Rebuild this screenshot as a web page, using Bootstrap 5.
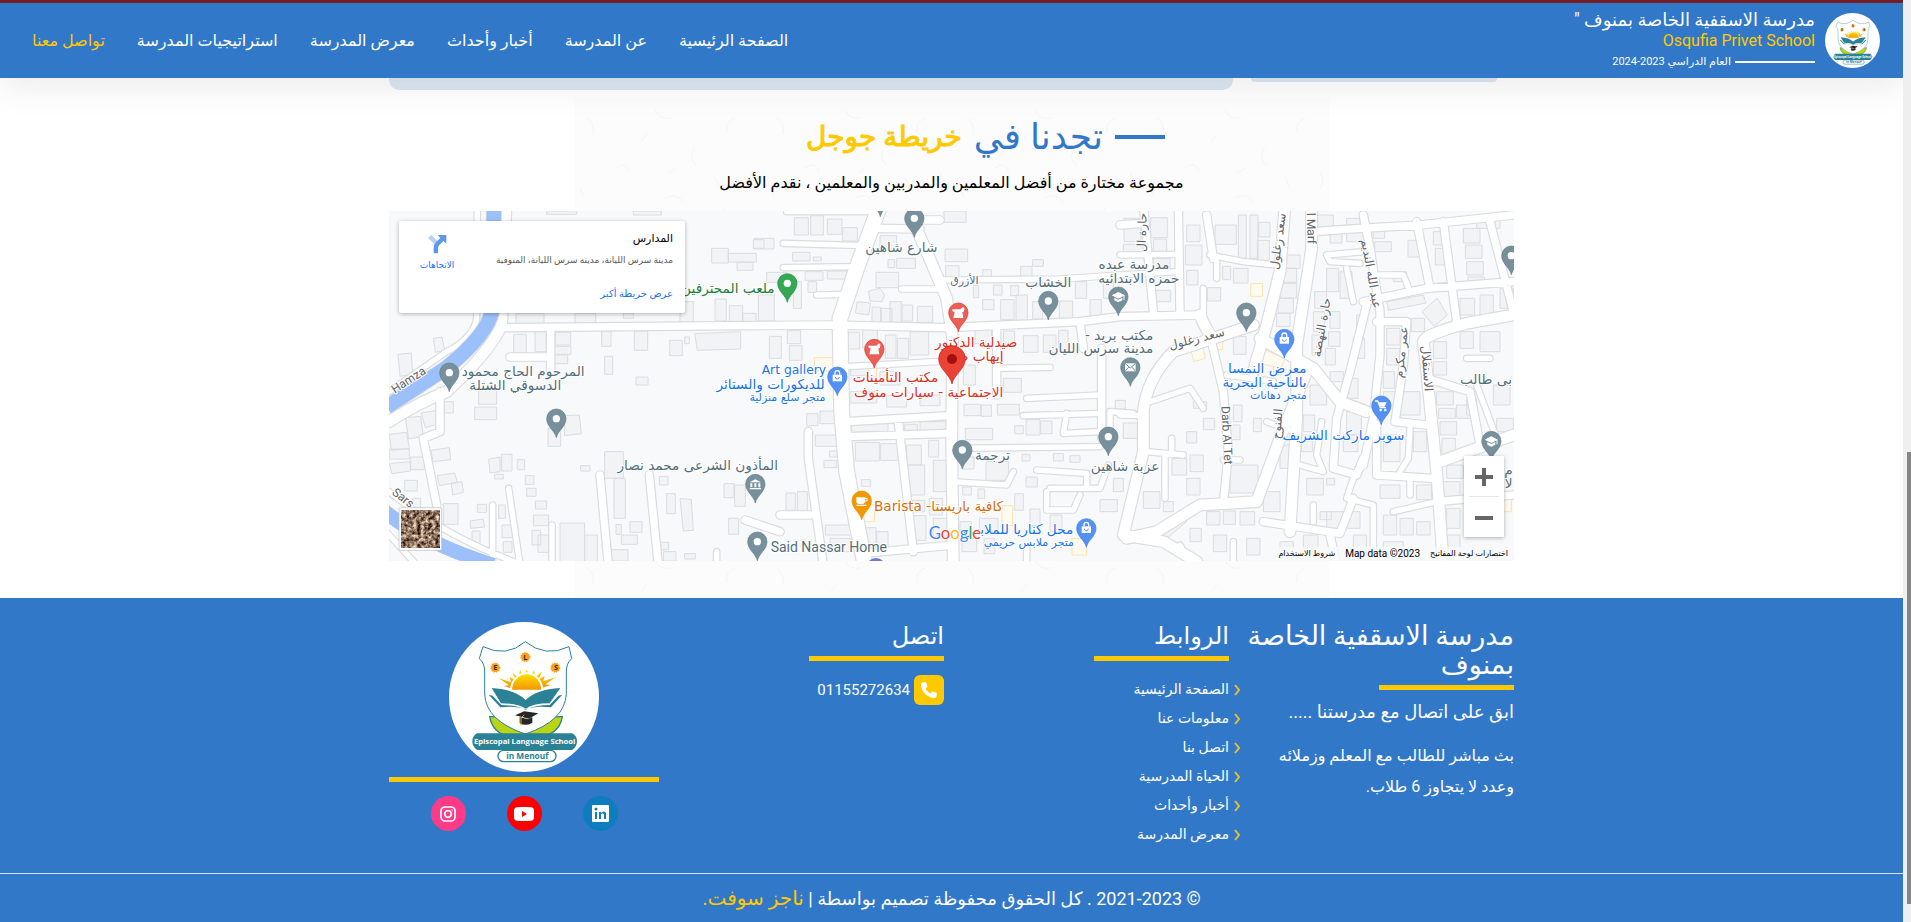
<!DOCTYPE html>
<html lang="ar" dir="rtl">
<head>
<meta charset="utf-8">
<meta name="viewport" content="width=device-width, initial-scale=1">
<title>مدرسة الاسقفية الخاصة بمنوف - تواصل معنا</title>
<link href="https://cdn.jsdelivr.net/npm/bootstrap@5.3.0/dist/css/bootstrap.min.css" rel="stylesheet">
<script src="https://cdn.jsdelivr.net/npm/bootstrap@5.3.0/dist/js/bootstrap.bundle.min.js" defer></script>
<style>
:root{--blue:#3178c9;--gold:#ffc900}
body{font-family:Roboto,"DejaVu Sans",sans-serif;padding-right:8px;background:#fff;color:#000;font-size:14px}
a{text-decoration:none}
.page-scroll{position:fixed;top:0;right:0;bottom:0;width:8px;background:#efefef;z-index:1050}
.page-scroll span{position:absolute;right:0;width:4px;top:49%;bottom:2%;background:#858585}
.site-head{background:var(--blue);border-top:3px solid #741d25;height:78px;box-shadow:0 12px 32px rgba(0,0,0,.07);padding:0 23px 0 32px}
.brand-text{padding-right:10px}
.brand-name{font-size:18px;line-height:20px;color:#fff}
.brand-en{font-size:16px;line-height:22px;color:var(--gold);text-align:right}
.brand-year{font-size:11px;line-height:20px;color:#fff}
.brand-year i{width:80px;height:2px;background:#fff}
.main-nav{gap:32px}
.main-nav .nav-link{font-size:16px;padding:0;color:#fff;white-space:nowrap}
.main-nav .nav-link.active{color:var(--gold)}
.wrap{width:100%;max-width:1125px;margin:0 auto}
.peek{height:20px}
.peek div{background:#dce7f4;border-radius:0 0 10px 10px}
.peek .p-side{width:246px;height:4px;margin-right:17px}
.peek .p-main{height:12px;margin-right:18px}
.find-us{padding:14px 0 37px;background:url("data:image/svg+xml,%3Csvg xmlns='http://www.w3.org/2000/svg' width='754' height='500'%3E%3Cdefs%3E%3Cpattern id='p' width='190' height='150' patternUnits='userSpaceOnUse'%3E%3Cg fill='none' stroke='%23f4f4f4'%3E%3Cpath d='M12 20q8 6 6 16M40 70q10-8 14 4M80 12q4 10 16 8M120 50q-8 8 2 18M160 20q-10 4-8 14M30 120q10 2 12 12M90 100q12-6 18 4M150 110q-4 10-16 10M175 75q6 8 0 16M66 44l6-8M110 130l10 4M140 80l4 8M5 90l4 9M100 70l-7 5M60 140l3-9'/%3E%3C/g%3E%3C/pattern%3E%3C/defs%3E%3Crect width='754' height='500' fill='%23fcfcfc'/%3E%3Crect width='754' height='500' fill='url(%23p)'/%3E%3C/svg%3E") top center/754px 500px no-repeat}
.find-us h2{font-size:36px;line-height:50px;color:var(--blue);margin:0;gap:12px}
.find-us h2::before{content:"";width:50px;height:4px;background:var(--blue);margin-right:-68px}
.find-us h2 strong{color:var(--gold);font-size:28px;font-weight:400;-webkit-text-stroke:1px var(--gold)}
.find-us p{font-size:16px;line-height:24px;margin:9px 0 16px;text-align:center}
.map{height:350px;background:#f8f9fa;position:relative;overflow:hidden}
.map>svg{width:100%;height:100%;display:block;direction:ltr}
.map-card{position:absolute;left:10px;top:10px;width:286px;height:92px;background:#fff;box-shadow:0 1px 4px rgba(0,0,0,.3);border-radius:2px;padding:8px 12px}
.map-card h3{font-size:11px;line-height:20px;margin:0;color:#000}
.map-card p{font-size:9px;line-height:22px;margin:0;color:#5b5b5b;text-align:start;white-space:nowrap}
.map-card a{font-size:10px;color:#1a73e8;line-height:14px}
.map-card .more{margin-top:16px}
.map-card .dirs{width:52px;font-size:9px;padding-top:5px}
.map-zoom{position:absolute;right:10px;bottom:24px;width:40px;background:#fff;box-shadow:0 1px 4px rgba(0,0,0,.3)}
.map-zoom button{border:0;background:none;height:40px;width:40px;padding:0}
.map-zoom hr{width:30px;margin:0 auto;border-color:#999}
.map-legal{position:absolute;right:0;bottom:0;height:14px;background:rgba(248,249,250,.8);gap:10px;padding:0 6px;font-size:8px;line-height:13px;color:#000}
.map-legal a{color:#000}
.map-legal span{font-size:10px}
.site-foot{background:var(--blue);color:#fff}
.foot-grid{display:grid;grid-template-columns:repeat(4,minmax(0,1fr));gap:15px;padding:24px 0 24px}
.foot-grid h4{font-size:24px;line-height:29px;margin:0;font-weight:400}
.foot-grid h4.school{font-size:27px}
.bar{width:135px;height:5px;background:var(--gold);margin-top:5px}
.bar.wide{width:100%}
.foot-lead{font-size:18px;line-height:24px;margin:10px 0 16px}
.foot-text{font-size:16px;line-height:31px;margin:0}
.foot-links{list-style:none;padding:0;margin:14px 0 0}
.foot-links li{height:29px;line-height:29px;display:flex;align-items:center}
.foot-links svg{margin-right:-12px;margin-left:5px}
.foot-links a{color:#fff;font-size:14px}
.phone{margin-top:14px;gap:4px;font-size:15px}
.phone span{width:30px;height:30px;border-radius:6px;background:var(--gold)}
.phone a{color:#fff}
.social{gap:41px;margin-top:14px}
.social a{width:35px;height:35px;border-radius:50%}
.social .in{background:#0e7dbe}.social .yt{background:#f00}.social .ig{background:#ff3a86}
.copy{border-top:1px solid #d5e4f5;height:49px;font-size:18px}
.copy a{color:var(--gold);font-size:20px}
/* street map */
.roads{fill:none;stroke-linejoin:round;stroke-linecap:round;--c:0px}
.roads.case{--c:7px;stroke:#dadce0}
.roads.face{stroke:#fff}
.w1{stroke-width:calc(16px + var(--c))}.w2{stroke-width:calc(22px + var(--c))}.w3{stroke-width:calc(32px + var(--c))}.w4{stroke-width:calc(44px + var(--c))}
.lbl{font-family:"DejaVu Sans",sans-serif;font-size:41px;fill:#546e7a;stroke:#fff;stroke-width:6px;paint-order:stroke;stroke-linejoin:round}
.lbl.ar{direction:rtl}
.lbl.lat{font-family:Roboto,sans-serif;font-size:42px}
.lbl.gal{font-size:37px}
.lbl.sm{font-size:33px}
.lbl.st{font-size:36px;fill:#5f6368}
.lbl.b{fill:#1a73e8}.lbl.r{fill:#d93025}.lbl.g{fill:#188038}.lbl.o{fill:#d56e0c}
</style>
</head>
<body>
<svg width="0" height="0" class="position-absolute" aria-hidden="true">
<defs>
<linearGradient id="sun" x1="0" y1="0" x2="0" y2="1"><stop offset="0" stop-color="#ffe100"/><stop offset="1" stop-color="#f39200"/></linearGradient>
<symbol id="crest" viewBox="0 0 450 450">
<circle cx="225" cy="225" r="225" fill="#fff"/>
<path d="M122 284q70-2 106 50q36-52 112-50q-10 60-84 62h-50q-74-2-84-62z" fill="#b9d514" stroke="#2b8296" stroke-width="4"/>
<path d="M102 74q70 34 127-15q60 49 131 15l8 36q-18 14-16 46v60q-4 80-123 120q-119-40-122-120v-60q2-32-16-46z" fill="#fff" stroke="#2b8296" stroke-width="3"/>
<g fill="#f9a11b" stroke="#f9a11b" stroke-width="4" stroke-dasharray="4 3"><circle cx="139" cy="137" r="13"/><circle cx="229" cy="105" r="13"/><circle cx="319" cy="137" r="13"/></g>
<g font-family="Open Sans,sans-serif" font-weight="700" font-size="22" text-anchor="middle" fill="#3a2c28"><text x="139" y="145">E</text><text x="229" y="113">L</text><text x="321" y="145">S</text></g>
<path d="M188 200l-24-8 16-2-32-22 38 13-4-16 18 10-10-24 18 18 5-25 12 22 8-24 10 24 12-22 4 22 20-18-10 24 18-10-4 16 38-13-32 22 16 2-24 8z" fill="url(#sun)"/>
<path d="M186 206a47 52 0 0 1 94 0z" fill="url(#sun)" stroke="#fff" stroke-width="6"/>
<path d="M128 198q70 4 102 36q32-32 104-36l-32 46q-48 0-72 16q-24-16-74-16z" fill="#2b8296"/>
<path d="M119 218l12 3 26 28q44 0 73 14q30-14 72-14l26-28 12-3-34 38q-46-6-76 6q-30-12-76-6z" fill="#2b8296"/>
<path id="crestArc" d="M174 292q55 56 118-4" fill="none"/>
<text font-family="Open Sans,sans-serif" font-weight="700" font-size="11" fill="#2b8296"><textPath href="#crestArc">Episcopal School Menouf</textPath></text>
<path d="M198 280l28-12 42 6-28 16zM212 286v18q18 10 38-2v-16l-12 6z" fill="#262626"/><path d="M226 278l-10 10v22" stroke="#e7a916" stroke-width="3" fill="none"/>
<path d="M84 334h286q14 8 14 24q0 16-14 26H84q-14-10-14-26q0-16 14-24z" fill="#2b8296"/>
<text x="227" y="365" text-anchor="middle" font-family="Open Sans,sans-serif" font-weight="700" font-size="23" fill="#fff">Episcopal Language School</text>
<rect x="147" y="385" width="174" height="34" rx="17" fill="#fff" stroke="#2b8296" stroke-width="4"/>
<text x="235" y="411" text-anchor="middle" font-family="Open Sans,sans-serif" font-weight="700" font-size="25" fill="#2b8296">in Menouf</text>
</symbol>
</defs>
</svg>

<header class="site-head d-flex align-items-center justify-content-between sticky-top">
<a href="#" class="d-flex align-items-center">
<svg width="55" height="55" role="img" aria-label="Episcopal Language School"><use href="#crest"/></svg>
<span class="brand-text d-flex flex-column">
<span class="brand-name">مدرسة الاسقفية الخاصة بمنوف "</span>
<span class="brand-en" dir="ltr">Osqufia Privet School</span>
<span class="brand-year d-flex align-items-center gap-1"><i></i><span>العام الدراسي 2023-2024</span></span>
</span>
</a>
<nav class="main-nav nav flex-nowrap">
<a class="nav-link" href="#">الصفحة الرئيسية</a>
<a class="nav-link" href="#">عن المدرسة</a>
<a class="nav-link" href="#">أخبار وأحداث</a>
<a class="nav-link" href="#">معرض المدرسة</a>
<a class="nav-link" href="#">استراتيجيات المدرسة</a>
<a class="nav-link active" href="#" aria-current="page">تواصل معنا</a>
</nav>
</header>

<main>
<div class="wrap peek d-flex align-items-start"><div class="p-side"></div><div class="p-main flex-fill"></div></div>
<section class="find-us">
<h2 class="d-flex align-items-center justify-content-center fw-normal"><span>تجدنا في</span><strong>خريطة جوجل</strong></h2>
<p>مجموعة مختارة من أفضل المعلمين والمدربين والمعلمين ، نقدم الأفضل</p>
<div class="wrap"><div class="map">
<svg viewBox="27 18 3375 1050" preserveAspectRatio="xMidYMid slice" role="img" aria-label="خريطة">
<defs>
<filter id="ground" x="0" y="0" width="1" height="1" color-interpolation-filters="sRGB"><feTurbulence type="fractalNoise" baseFrequency=".09" numOctaves="3" seed="4"/><feColorMatrix values="1.6 0 0 0 -.24  1.5 .1 0 0 -.34  1.3 0 .1 0 -.32  0 0 0 0 1"/></filter>
<g id="pin"><path d="M0 57C-4 36-29 24-29 0A29 29 0 1 1 29 0C29 24 4 36 0 57Z"/></g>
<g id="pinDot"><use href="#pin" fill="#78909c" stroke="#607d8b" stroke-width="2"/><circle r="11" fill="#fff"/></g>
<g id="bag"><use href="#pin" fill="#5491f5" stroke="#3c7ce0" stroke-width="2"/><path d="M-14-6h28v20h-28z" fill="#fff"/><path d="M-7-6v-5a7 7 0 0 1 14 0v5" fill="none" stroke="#fff" stroke-width="4"/><path d="M-6 1a6 6 0 0 0 12 0" fill="none" stroke="#5491f5" stroke-width="3"/></g>
<g id="grad"><use href="#pin" fill="#78909c" stroke="#607d8b" stroke-width="2"/><path d="M-20-4L0-14 20-4 0 6zM-12 3L0 9 12 3v8L0 17-12 11z" fill="#fff"/><path d="M17-4v14" stroke="#fff" stroke-width="3"/></g>
<g id="pharm"><use href="#pin" fill="#ec5f57" stroke="#d93025" stroke-width="2"/><path d="M-18-10h24l8-7 5 5-2 4v4l-5 3 3 17h-30l4-17-7-4z" fill="#fff"/></g>
<g id="roadnet">
<path class="w1" d="M292 0L290 340Q280 400 200 440L27 560M27 860Q200 1000 430 1080M0 960L110 1080M386 850L420 1080M338 900V1080M516 960V1080M1010 1080V1040M1210 115L1460 122M1210 188L1440 185M1310 270L1400 268M1220 20H1500M1565 252H1690M1690 225L2040 222L2220 210L2390 200M1400 485L1700 468M1850 490L2010 487M1940 580L2160 570M1930 632L2165 625M2060 625L2050 685L2160 680M1715 730L2160 725M1710 830L1880 840L1900 800M1970 795L2120 805V850M2010 850H2160L2185 780M2000 860V915H2080L2100 870M2355 750V880M2375 700V740M2300 740L2410 750M2310 590L2430 550L2470 610M2470 250V330M2510 170V220M2220 630L2290 632M2840 150L2950 140M2840 150L2850 170L2940 175M2900 190L2920 290M3000 210L3070 210L3090 260M3260 460H3330M3290 540L3350 700M2825 650L2810 750L2830 800L2760 780M2920 820L2900 880L2980 900V1080M3040 920L3170 890M3090 670L3085 760L3060 800M3090 820V870M2660 650L2740 680M2560 1010V1080M2400 1020L2430 1080M1940 1030V1080M2190 700V620L2260 625M2220 150L2390 148M2490 150L2590 170L2690 180M2800 900V950M2540 510L2680 530M2530 765H2580"/>
<path class="w2" d="M370 368L1080 362L1360 360L1700 368L2100 350L2220 335L2460 330M180 560V680L130 700L170 900M390 456H512M512 368V500M660 810L685 1080M808 810L835 1080M1285 680V760L1330 1080M1095 945L1200 980M1200 930H1290M1480 70L1620 72M1610 45H1680M1400 650L1710 632M1400 695L1710 685M1555 650L1600 1040M1450 1045L1720 1020M1850 370V570M2165 430V700M2100 350L2110 430M2290 0L2320 320M2395 0L2400 330M2490 390L2530 560L2545 740L2530 900M2800 80L2940 70L3120 60L3400 30M2950 30L2970 130L3000 320L3000 450L2980 640L2950 780M2950 290L3140 250L3400 230M2960 300L2910 500L2870 640L2860 790L2930 810L2950 760M3110 50L3150 250M3190 50L3230 350M3330 50L3400 320M2990 350H3080L3070 480L3045 650L3140 660M3140 520L3270 560L3300 720M2990 660V810L3160 820M2650 950L2880 985L2920 880M2850 990L2870 1080M3170 890L3400 870M2480 30L2500 160M2220 60L2290 55"/>
<path class="w3" d="M378 0L365 360Q330 440 200 560Q120 590 27 650M1605 60L1700 280L1718 400L1715 700L1720 1080M2620 360Q2440 420 2380 440Q2300 520 2290 620L2290 740L2230 990L2350 1010L2450 1070M2460 330Q2480 380 2500 400M2715 0L2700 200L2660 360L2620 500M2795 0L2795 130L2750 420L2750 640L2730 980M2780 500L2700 700L2630 890L2460 900L2330 980L2240 1000M2640 400L2800 490L2880 590L2960 620M3400 330L3260 355Q3130 390 3130 410L3140 500L3170 800L3190 1080M3180 770L3400 690"/>
<path class="w4" d="M1500 0L1430 190L1380 340L1385 620L1400 800L1455 1080"/>
</g>
</defs>
<rect x="0" y="0" width="3420" height="1080" fill="#f8f9fa"/>
<g fill="#f1f3f4" stroke="#dadce0" stroke-width="3">
<path d="M500 18h90v10h-90zM760 18h84v12h-84zM1122 100h60v32h-60zM995 130h50v44h-50zM1045 145h84v26h-84zM1071 172h48v24h-48zM408 324h84v36h-84zM585 324h62v34h-62zM730 324h30v16h-30zM900 290h40v68h-40zM1005 282h34v66h-34zM1048 302h40v48h-40zM1088 325h40v30h-40zM401 388h38v56h-38zM465 380h34v60h-34zM526 382h46v38h-46zM515 424h58v24h-58zM515 450h48v26h-48zM665 378h28v46h-28zM763 378h40v58h-40zM869 406h38v46h-38zM914 396h14v20h-14zM944 386l138-6v52l-130 4zM674 454h24v54h-24zM768 516h36v24h-36zM160 400l26-4 8 40-28 6zM54 448l40-4 4 64-38 6zM296 556h54v42h-54zM284 606h66v38h-66zM552 632l46-2 6 56-50 6zM504 670h38v54h-38zM192 590h28v34h-28zM76 638l46-4 8 60-44 8zM124 624l46-8 6 40-40 12zM28 688l52-6 8 48-54 6zM28 732h60v30h-60zM28 776l62-6 2 28-56 8zM92 756h46v38h-46zM152 736l56-8 4 36-52 6zM172 812l52-8 8 28-54 10zM214 836l32-6 4 32-32 8zM74 826h38v32h-38zM326 762l34-6v44l-30 4zM364 748h32v50h-32zM412 764h22v30h-22zM344 808h26v14h-26zM436 812h26v26h-26zM440 850h28v24h-28zM466 888h34v24h-34zM460 930h46v32h-46zM356 900h20v40h-20zM292 898h28v24h-28zM270 948l40-6 4 24-42 4zM276 978h24v42h-24zM366 960h32v38h-32zM370 1010h26v32h-26zM456 976h26v44h-26zM474 990h32v52h-32zM540 954h74v120h-74zM614 990h38v80h-38zM674 740h56v80h-56zM702 820h34v120h-34zM602 782h28v16h-28zM838 814h26v26h-26zM860 866h26v60h-26zM900 880l34 4 6 92-30 2zM708 958h16v30h-16zM750 950h36v32h-36zM724 990h48v28h-48zM694 1034h50v34h-50zM842 1012h24v22h-24zM850 1040h38v28h-38zM914 1046h32v16h-32zM1032 836h30v42h-30zM1064 840h32v64h-32zM1046 940h30v48h-30zM190 896h44v62h-44zM98 880h24v30h-24z"/>
<path d="M1243 38h42v52h-42zM1292 32h38v58h-38zM1342 42h44v46h-44zM1388 68h44v40h-44zM1120 104h32v26h-32zM1238 142h52v26h-52zM1300 156h24v12h-24zM1160 202h60v30h-60zM1275 200h54v26h-54zM1342 198h80v24h-80zM1284 230h26v32h-26zM1135 270h48v78h-48zM1240 230h24v80h-24zM1692 18h66v34h-66zM1695 132h68v38h-68zM1697 182h40v40h-40zM1808 194h26v24h-26zM1922 184h34v30h-34zM1958 164h32v20h-32zM1500 92h50v40h-50zM1550 160h56v30h-56zM1524 164h20v24h-20zM1488 202h68v46h-68zM1466 258l34-8 14 20-8 20-36-2zM1432 290l40 4-6 36-40-6zM1476 306h26v46h-26zM1504 310h32v42h-32zM1530 290h34v62h-34zM1566 300h32v48h-32zM1612 304h46v48h-46zM1405 382h34v50h-34zM1448 374h44v54h-44zM1516 390h32v70h-32zM1552 400h34v60h-34zM1590 380h56v70h-56zM1168 394h36v66h-36zM1222 376h40v40h-40zM1228 422h38v44h-38zM1780 242h16v36h-16zM1840 240h26v30h-26zM1892 242h24v30h-24zM1808 284h34v30h-34zM1862 284h40v60h-40zM1908 270h34v76h-34zM1958 290h30v52h-30zM2038 288h40v54h-40zM2086 230h34v50h-34zM2130 284h34v54h-34zM2170 230h30v50h-30zM1785 366h50v50h-50zM1870 378h34v40h-34zM1930 392h44v50h-44zM1990 390h38v52h-38zM2036 376h28v56h-28zM1750 480h36v60h-36zM1870 520h54v42h-54zM1752 598h50v34h-50zM1804 600h30v34h-30zM1852 598h66v32h-66zM1412 490h70v22h-70zM1500 500h60v40h-60zM1410 560h80v34h-80zM1520 572h60v34h-60zM1620 570h60v32h-60zM1280 626h34v36h-34zM1320 618h60v38h-60zM1306 690h78v34h-78zM1414 656h110v34h-110zM1574 658h38v24h-38zM1620 650h86v26h-86zM1426 712h72v56h-72zM1502 716h54v50h-54zM1646 706h30v50h-30zM1580 720h44v60h-44zM1584 780h50v90h-50zM1660 766h50v94h-50zM1348 738h24v18h-24zM1332 766h38v22h-38zM1444 824h28v20h-28zM1756 670h82v34h-82zM1904 662h26v24h-26zM1938 644h42v46h-42zM1982 648h34v38h-34zM1818 770h68v56h-68zM1748 756h34v36h-34zM1926 748h24v20h-24zM2020 746h30v22h-30zM2070 752h30v20h-30zM1938 816h34v30h-34zM1904 866h26v50h-26zM1748 846h26v24h-26zM1794 852h20v28h-20zM2160 884h52v36h-52zM2200 820h30v40h-30zM1218 864h28v52h-28zM1252 860h30v60h-30zM1336 960h84v30h-84zM1350 1000h80v40h-80zM1456 968h32v56h-32zM1490 980h34v58h-34zM1600 932h38v74h-38zM1648 880h40v50h-40zM1660 940h44v60h-44zM1590 886h44v34h-44zM1798 940h56v40h-56zM1812 1000h32v46h-32zM1740 950h34v44h-34zM1950 912h30v50h-30zM2010 930h36v50h-36zM2230 656h44v44h-44zM2206 586h30v26h-30zM1746 1000h44v40h-44z"/>
<path d="M2232 40h50v70h-50zM2230 118h60v30h-60zM2312 38h50v60h-50zM2320 102h40v40h-40zM2320 160h50v40h-50zM2322 256h50v34h-50zM2420 60h40v50h-40zM2416 120h50v60h-50zM2420 196h34v44h-34zM2482 248h40v40h-40zM2505 60h64v58h-64zM2575 30h24v130h-24zM2610 30h24v130h-24zM2528 184h24v40h-24zM2560 190h44v44h-44zM2636 52h34v44h-34zM2632 106h36v60h-36zM2710 150h50v40h-50zM2704 190h46v42h-46zM2700 235h50v44h-50zM2694 280h46v44h-46zM2690 325h40v40h-40zM2804 260h36v50h-36zM2800 320h34v60h-34zM2796 390h30v60h-30zM2850 320h30v50h-30zM2846 380h34v44h-34zM2836 430h30v50h-30zM2850 500h40v30h-40zM2790 540h50v60h-50zM2560 394h38v54h-38zM2560 600h26v50h-26zM2540 660h40v44h-40zM2550 780h84v84h-84zM2440 590h40v20h-40zM2470 640h34v34h-34zM2420 680h30v34h-30zM2376 760h44v50h-44zM2430 750h40v50h-40zM2420 820h40v50h-40zM2480 920h40v40h-40zM2530 918h36v40h-36zM2580 920h44v40h-44zM2230 654h44v46h-44zM2290 860h50v50h-50zM2350 890h30v30h-30zM2330 970l80-40 10 20-60 50zM2430 970h34v40h-34zM2680 470h24v40h-24zM2620 640h24v40h-24zM2710 620h40v36h-40zM2700 720h34v70h-34zM2650 860h50v60h-50zM2770 630h34v50h-34zM2764 690h34v50h-34zM2780 820h50v50h-50zM2840 820h24v20h-24zM2900 620h44v70h-44zM2890 690h44v50h-44zM2840 920h50v50h-50zM2770 990h44v40h-44zM2820 920h34v24h-34zM2800 30h60v50h-60zM2900 40h40v40h-40zM2850 84h36v30h-36zM2900 80h50v30h-50zM2840 190h36v70h-36zM2880 200h36v80h-36zM2980 60h34v40h-34zM2984 110h50v30h-50zM3084 106h44v50h-44zM3160 80h40v40h-40zM3166 130h44v50h-44zM3040 200h40v30h-40zM3020 290l110-20 8 24-112 22zM3126 320l46-40 30 50-40 34zM3094 340h40v40h-40zM3250 70h50v44h-50zM3256 120h50v40h-50zM3260 170h50v40h-50zM3264 216h50v30h-50zM3290 40h70v30h-70zM3240 280h44v50h-44zM3300 270h40v60h-40zM3360 250h40v60h-40zM3160 410h40v50h-40zM3160 470h40v40h-40zM3240 380h40v50h-40zM3300 380h60v60h-60zM3170 560h50v40h-50zM3176 610h50v30h-50zM3180 650h50v40h-50zM3186 700h40v50h-40zM3230 600h50v40h-50zM3260 580h30v50h-30zM3340 540h50v60h-50zM3350 640h50v40h-50zM3020 370h40v50h-40zM3020 430h40v50h-40zM3010 500h34v50h-34zM3010 560h40v40h-40zM3060 560h60v70h-60zM3100 680h40v60h-40zM3010 690h50v80h-50zM3200 780h50v40h-50zM3190 830h50v50h-50zM3000 840h60v40h-60zM3110 840h44v44h-44zM3010 930h40v60h-40zM3060 940h40v50h-40zM3110 950h40v40h-40zM3200 910h40v60h-40zM3010 1010h60v50h-60zM3200 990h40v60h-40zM2900 920h40v50h-40zM2920 990h40v60h-40zM2700 1010h40v50h-40zM2500 990h40v50h-40zM2600 1000h40v50h-40zM2930 330h24v50h-24zM2920 400h34v60h-34zM2900 520h34v60h-34z"/>
</g>
<g fill="#fffaf0" stroke="#fbe3ae" stroke-width="3"><path d="M1303 458h74v40h-74zM1464 480h26v36h-26zM1444 900h40v50h-40zM1866 902h32v60h-32zM2076 1000h44v50h-44zM2612 236h36v38h-36zM2430 426l36-12 10 46-34 10zM2510 404h18v30h-18zM2644 430l70 30-10 30-62-14zM3370 860h24v60h-24z"/></g>
<g class="roads case"><use href="#roadnet"/></g>
<g class="roads face"><use href="#roadnet"/></g>
<path d="M342 0L336 320Q320 390 200 488L20 606" fill="none" stroke="#dadce0" stroke-width="48"/>
<path d="M342 0L336 320Q320 390 200 488L20 606M10 915Q120 1010 340 1080" fill="none" stroke="#9cc0f9" stroke-width="43"/>

<g>
<text class="lbl lat st" transform="translate(44 566) rotate(-33)">Hamza</text>
<text class="lbl lat st" transform="translate(34 866) rotate(38)">Sars</text>
<text class="lbl ar" x="614" y="512">المرحوم الحاج محمود</text><text class="lbl ar" x="544" y="554">الدسوقي الشتلة</text>
<text class="lbl ar" x="1194" y="794">المأذون الشرعى محمد نصار</text>
<text class="lbl ar g" x="1184" y="264">ملعب المحترفين</text>
<text class="lbl b gal" x="1145" y="508">Art gallery</text><text class="lbl ar b" x="1334" y="552">للديكورات والستائر</text><text class="lbl ar b sm" x="1336" y="587">متجر سلع منزلية</text>
<text class="lbl ar" x="1672" y="142">شارع شاهين</text>
<text class="lbl ar sm" x="1796" y="238">الأزرق</text>
<text class="lbl ar" x="2074" y="245">الخشاب</text>
<text class="lbl ar" x="2368" y="192">مدرسة عبده</text><text class="lbl ar" x="2398" y="234">حمزه الابتدائيه</text>
<text class="lbl ar r" x="1912" y="426">صيدلية الدكتور</text><text class="lbl ar r" x="1871" y="468">إيهاب صيب</text>
<text class="lbl ar r" x="1675" y="532">مكتب التأمينات</text><text class="lbl ar r" x="1870" y="575">الاجتماعية - سيارات منوف</text>
<text class="lbl ar" x="2320" y="404">مكتب بريد -</text><text class="lbl ar" x="2320" y="445">مدينة سرس الليان</text>
<text class="lbl ar" x="1890" y="765">ترجمة</text>
<text class="lbl ar" x="2338" y="798">عزبة شاهين</text>
<text class="lbl o" x="1482" y="918">Barista -كافية باريستا</text>
<text class="lbl lat" x="1172" y="1040">Said Nassar Home</text>
<text class="lbl ar b" x="2080" y="986">محل كناريا للملابس</text><text class="lbl ar b sm" x="2082" y="1022">متجر ملابس حريمي</text>
<text class="lbl ar b" x="2780" y="504">معرض النمسا</text><text class="lbl ar b" x="2780" y="545">بالناحية البحرية</text><text class="lbl ar b sm" x="2780" y="582">متجر دهانات</text>
<text class="lbl ar b" x="3073" y="705">سوبر ماركت الشريف</text>
<text class="lbl ar" x="3396" y="536">بى طالب</text>
<text class="lbl ar" x="3398" y="810">م</text><text class="lbl ar" x="3398" y="850">لا</text>
<text class="lbl ar st" transform="translate(2536 392) rotate(-14)">سعد زغلول</text>
<text class="lbl ar st" transform="translate(2718 26) rotate(-82)">سعد زغلول</text>
<text class="lbl ar st" transform="translate(2300 24) rotate(-88)">حارة ال</text>
<text class="lbl lat st" transform="translate(2780 24) rotate(88)">l Marf</text>
<text class="lbl lat st" transform="translate(2524 604) rotate(87)">Darb Al Tet</text>
<text class="lbl ar st" transform="translate(2980 312) rotate(80)">عبد الله النديم</text>
<text class="lbl ar st" transform="translate(2852 280) rotate(-80)">حارة النهضة</text>
<text class="lbl ar st" transform="translate(3084 366) rotate(-84)">عمر مكرم</text>
<text class="lbl ar st" transform="translate(3134 560) rotate(86)">الاستقلال</text>
<text class="lbl ar st" transform="translate(2708 612) rotate(-85)">الفنوح</text>
</g>

<use href="#pinDot" x="208" y="503"/><use href="#pinDot" x="529" y="641"/><use href="#pinDot" x="1132" y="1010"/><use href="#pinDot" x="1603" y="40"/><use href="#pinDot" x="1501" y="-22"/><use href="#pinDot" x="2005" y="288"/><use href="#pinDot" x="2185" y="695"/><use href="#pinDot" x="1747" y="735"/><use href="#pinDot" x="2599" y="323"/><use href="#pinDot" x="3394" y="152"/>
<use href="#grad" x="2215" y="275"/><use href="#grad" x="3334" y="708"/>
<use href="#bag" x="1372" y="515"/><use href="#bag" x="2119" y="970"/><use href="#bag" x="2713" y="402"/>
<use href="#pharm" x="1735" y="323"/><use href="#pharm" x="1483" y="432"/>
<g transform="translate(1126 837)"><use href="#pin" fill="#78909c" stroke="#607d8b" stroke-width="2"/><path d="M-17-5L0-14 17-5zM-15-2h6v12h-6zM-3-2h6v12h-6zM9-2h6v12h-6zM-17 12h34v4h-34z" fill="#fff"/></g>
<g transform="translate(1222 235)"><use href="#pin" fill="#34a853" stroke="#1e8e3e" stroke-width="2"/><circle r="11" fill="#fff"/></g>
<g transform="translate(2251 487)"><use href="#pin" fill="#78909c" stroke="#607d8b" stroke-width="2"/><path d="M-16-12h32v24h-32z" fill="#fff"/><path d="M-16-12L0 2 16-12M-16 12L-4-1M16 12L4-1" stroke="#78909c" stroke-width="3" fill="none"/></g>
<g transform="translate(1445 887)"><use href="#pin" fill="#f29900" stroke="#e08600" stroke-width="2"/><path d="M-16-10h26v14q-2 6-8 6h-10q-6 0-8-6zM-16 12h30v4h-30z" fill="#fff"/><path d="M10-7h6v8h-6" fill="none" stroke="#fff" stroke-width="3"/></g>
<g transform="translate(3004 602)"><use href="#pin" fill="#5491f5" stroke="#3c7ce0" stroke-width="2"/><path d="M-19-14h8l8 20h17" fill="none" stroke="#fff" stroke-width="4"/><path d="M-10-10h26l-6 13H-4z" fill="#fff"/><circle cx="-2" cy="13" r="4" fill="#fff"/><circle cx="12" cy="13" r="4" fill="#fff"/></g>
<circle cx="1488" cy="1088" r="29" fill="#7378d0"/>
<path d="M1716 537C1710 508 1676 492 1676 462A40 40 0 1 1 1756 462C1756 492 1722 508 1716 537Z" fill="#ea4335" stroke="#c5221f" stroke-width="2"/><circle cx="1716" cy="462" r="15" fill="#a50e0e"/>
<text x="1646" y="1002" font-family="Lato,sans-serif" font-size="50" stroke="#fff" stroke-width="4" paint-order="stroke"><tspan fill="#4285f4">G</tspan><tspan fill="#ea4335">o</tspan><tspan fill="#fbbc04">o</tspan><tspan fill="#4285f4">g</tspan><tspan fill="#34a853">l</tspan><tspan fill="#ea4335">e</tspan></text>
<rect x="57" y="908" width="128" height="128" rx="5" fill="#fff" stroke="#bbb" stroke-width="2"/><rect x="64" y="915" width="114" height="114" fill="#8a7562" filter="url(#ground)"/>
</svg>

<div class="map-card d-flex justify-content-between">
<div><h3>المدارس</h3><p>مدينة سرس الليانة، مدينه سرس الليانة، المنوفية</p><a href="#" class="more d-block">عرض خريطة أكبر</a></div>
<a href="#" class="dirs text-center"><svg width="20" height="20" viewBox="0 0 60 60" class="d-block mx-auto mb-1"><path d="M3 12L13 3l22 22-9 9z" fill="#b6d1f8"/><path d="M32 3h26v26l-9-8-12 12q-4 4-4 10v15H20V42q0-10 7-17l13-13z" fill="#5e98e8"/></svg>الاتجاهات</a>
</div>
<div class="map-zoom d-flex flex-column">
<button type="button" aria-label="تكبير"><svg width="18" height="18" viewBox="0 0 18 18"><path d="M7 0h4v7h7v4h-7v7H7v-7H0V7h7z" fill="#666"/></svg></button><hr>
<button type="button" aria-label="تصغير"><svg width="18" height="18" viewBox="0 0 18 18"><path d="M0 7h18v4H0z" fill="#666"/></svg></button>
</div>
<div class="map-legal d-flex"><a href="#">اختصارات لوحة المفاتيح</a><span dir="ltr">Map data ©2023</span><a href="#">شروط الاستخدام</a></div>
</div></div>
</section>
</main>

<footer class="site-foot">
<div class="wrap foot-grid">
<div><h4 class="school">مدرسة الاسقفية الخاصة بمنوف</h4><div class="bar"></div>
<p class="foot-lead">ابق على اتصال مع مدرستنا .....</p>
<p class="foot-text">بث مباشر للطالب مع المعلم وزملائه<br>وعدد لا يتجاوز 6 طلاب.</p></div>
<div><h4>الروابط</h4><div class="bar"></div>
<ul class="foot-links">
<li><svg width="7" height="12" viewBox="0 0 7 12"><path d="M1 1l4 5-4 5" fill="none" stroke="#e9c02c" stroke-width="2"/></svg><a href="#">الصفحة الرئيسية</a></li>
<li><svg width="7" height="12" viewBox="0 0 7 12"><path d="M1 1l4 5-4 5" fill="none" stroke="#e9c02c" stroke-width="2"/></svg><a href="#">معلومات عنا</a></li>
<li><svg width="7" height="12" viewBox="0 0 7 12"><path d="M1 1l4 5-4 5" fill="none" stroke="#e9c02c" stroke-width="2"/></svg><a href="#">اتصل بنا</a></li>
<li><svg width="7" height="12" viewBox="0 0 7 12"><path d="M1 1l4 5-4 5" fill="none" stroke="#e9c02c" stroke-width="2"/></svg><a href="#">الحياة المدرسية</a></li>
<li><svg width="7" height="12" viewBox="0 0 7 12"><path d="M1 1l4 5-4 5" fill="none" stroke="#e9c02c" stroke-width="2"/></svg><a href="#">أخبار وأحداث</a></li>
<li><svg width="7" height="12" viewBox="0 0 7 12"><path d="M1 1l4 5-4 5" fill="none" stroke="#e9c02c" stroke-width="2"/></svg><a href="#">معرض المدرسة</a></li>
</ul></div>
<div><h4>اتصل</h4><div class="bar"></div>
<div class="phone d-flex align-items-center"><span class="d-flex align-items-center justify-content-center"><svg width="16" height="16" viewBox="0 0 512 512"><path fill="#fff" d="M164.900 24.600c-7.700-18.600-28-28.500-47.400-23.200l-88 24C12.100 30.200 0 46 0 64c0 247.400 200.600 448 448 448 18 0 33.800-12.100 38.600-29.500l24-88c5.300-19.400-4.600-39.700-23.200-47.400l-96-40c-16.300-6.800-35.200-2.100-46.300 11.600L304.700 368C234.300 334.700 177.300 277.700 144 207.300l49.300-40.300c13.700-11.200 18.400-30 11.600-46.300z"/></svg></span><a href="tel:01155272634" dir="ltr">01155272634</a></div></div>
<div><svg width="150" height="150" class="d-block mx-auto" role="img" aria-label="Episcopal Language School in Menouf"><use href="#crest"/></svg><div class="bar wide"></div>
<div class="social d-flex justify-content-center">
<a href="#" aria-label="LinkedIn" class="in d-flex align-items-center justify-content-center"><svg width="17" height="17" viewBox="0 0 17 17"><rect width="17" height="17" rx="1" fill="#fff"/><path d="M3 7h2v7H3zM7 7h2v1q3-3 5 0v6h-2v-4q0-2-2-1.500-1 .3-1 1.500v4H7z" fill="#0e7dbe"/><circle cx="4" cy="4" r="1.500" fill="#0e7dbe"/></svg></a>
<a href="#" aria-label="YouTube" class="yt d-flex align-items-center justify-content-center"><svg width="20" height="14" viewBox="0 0 20 14"><path d="M3 .3Q10-.4 17 .3q3 .2 3 3.200v7q0 3-3 3.200-7 .6-14 0-3-.2-3-3.200v-7Q0 .5 3 .3z" fill="#fff"/><path d="M8 4l5 3-5 3z" fill="#f00"/></svg></a>
<a href="#" aria-label="Instagram" class="ig d-flex align-items-center justify-content-center"><svg width="16" height="16" viewBox="0 0 16 16" fill="none" stroke="#fff"><rect x="1" y="1" width="14" height="14" rx="4" stroke-width="1.700"/><circle cx="8" cy="8" r="3.300" stroke-width="1.700"/><circle cx="12" cy="4" r=".8" fill="#fff" stroke="none"/></svg></a>
</div></div>
</div>
<div class="copy d-flex align-items-center justify-content-center"><span>© <bdi dir="ltr">2021-2023</bdi> . كل الحقوق محفوظة تصميم بواسطة | <a href="#">ناجز سوفت.</a></span></div>
</footer>
<div class="page-scroll" aria-hidden="true"><span></span></div>
</body>
</html>
